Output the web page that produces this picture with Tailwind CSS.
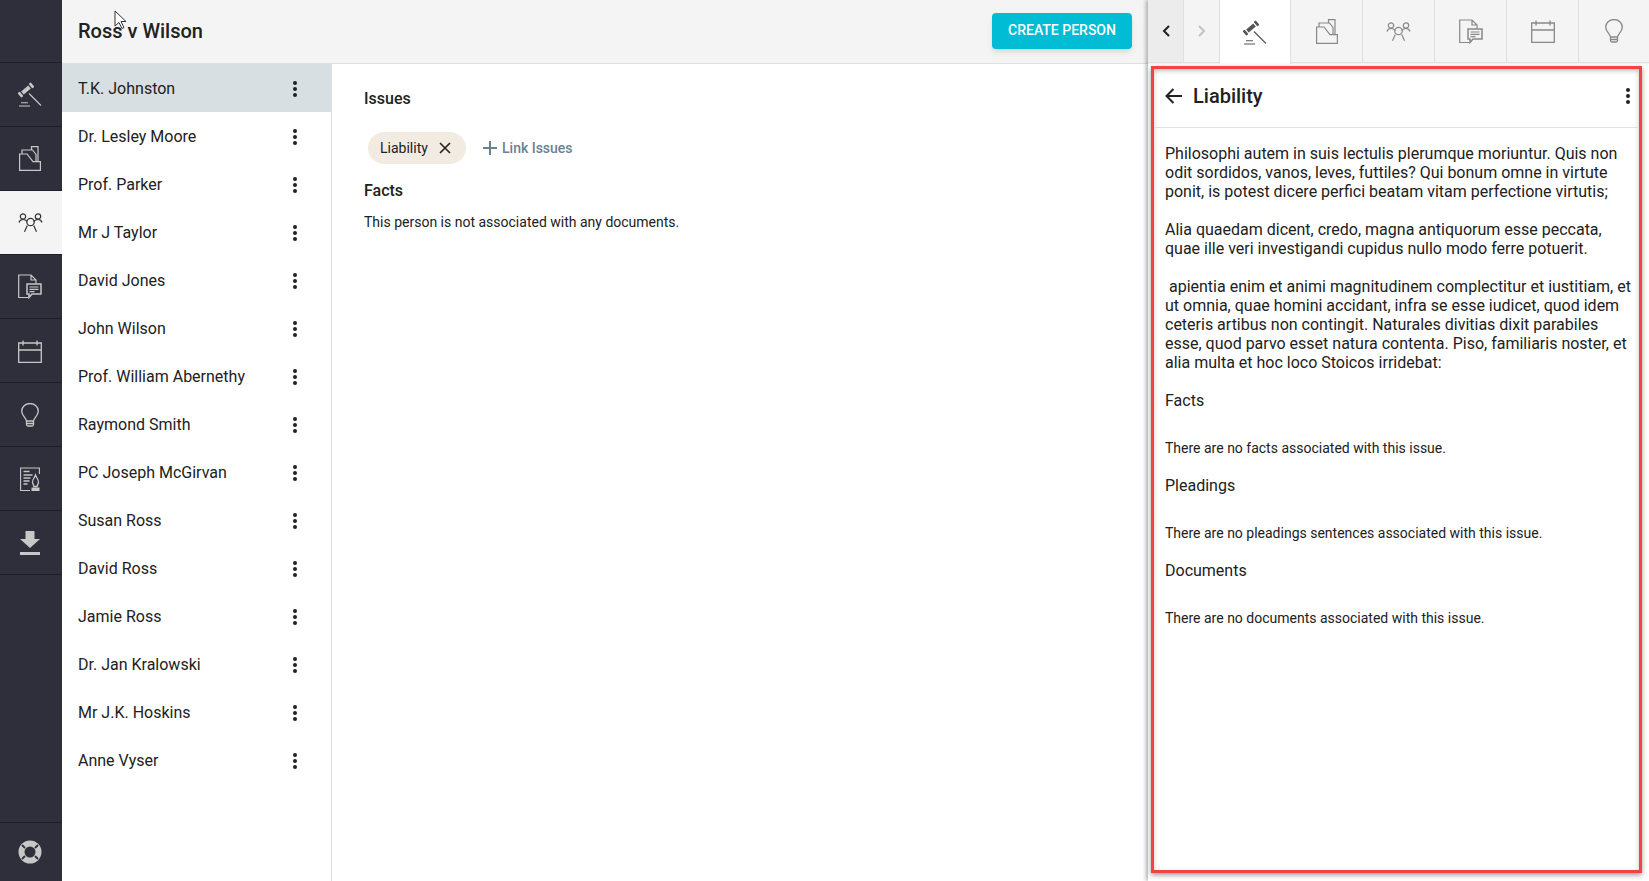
<!DOCTYPE html>
<html lang="en">
<head>
    <meta charset="UTF-8" />
    <title>Ross v Wilson</title>
    <script src="https://cdn.jsdelivr.net/npm/@tailwindcss/browser@4"></script>
</head>
<body class="font-['Roboto',sans-serif] text-[#212121] bg-white overflow-hidden">
<div class="flex w-[1649px] h-[881px] overflow-hidden">

    <!-- left nav -->
    <nav class="w-[62px] shrink-0 bg-[#2f2f3b] flex flex-col text-[#c8c8c8] z-10">
        <div class="h-[63px] border-b border-[#1f1f27]"></div>
        <a class="h-[64px] pr-[2px] flex items-center justify-center border-b border-[#1f1f27]">
            <svg class="w-[24px] h-[25px]" viewBox="0 0 24 25" fill="currentColor"><g transform="translate(8 8) rotate(-40)"><rect x="-8.500" y="-3" width="2.600" height="6" rx="1"/><rect x="-4.600" y="-2" width="9.200" height="4"/><rect x="5.900" y="-3" width="2.600" height="6" rx="1"/></g><path fill="none" stroke="currentColor" stroke-width="1.100" d="M11 11.500l12 12M3 20.800h7M1 24h11"/></svg>
        </a>
        <a class="h-[64px] pr-[2px] flex items-center justify-center border-b border-[#1f1f27]">
            <svg class="w-[22px] h-[25px]" viewBox="0 0 22 25" fill="none" stroke="currentColor" stroke-width="1.200"><path d="M0.600 24.400V8h7.400l6 7.700h7.400v8.700zM3 8V4h10.500l3.500 4.500v7M12.500 4V0.700h6.500v15"/></svg>
        </a>
        <a class="h-[64px] pr-[2px] flex items-center justify-center border-b border-[#1f1f27] bg-[#f4f4f4] text-[#333]">
            <svg class="w-[25px] h-[21px]" viewBox="0 0 24 21" fill="none" stroke="currentColor" stroke-width="1.200"><circle cx="4.500" cy="4.500" r="2.700"/><circle cx="19.500" cy="4.500" r="2.700"/><circle cx="12" cy="10" r="3.700"/><path d="M8.800 13.500L6 19.700M15.200 13.500L18 19.700M0.500 10.500C1 8.500 2.500 7.500 4.500 7.500S7.500 8 8.800 9.500M23.500 10.500C23 8.500 21.500 7.500 19.500 7.500S16.500 8 15.200 9.500"/></svg>
        </a>
        <a class="h-[64px] pr-[2px] flex items-center justify-center border-b border-[#1f1f27]">
            <svg class="w-[24px] h-[25px]" viewBox="0 0 24 25" fill="none" stroke="currentColor" stroke-width="1.200"><path d="M10 23.500H0.700V1H13l5 5v3.500M13 1v5h5"/><path stroke-width="1.500" d="M9 10h14v10h-9l-3 3.500V20H9z"/><path d="M11.500 13h9M11.500 15.300h9M11.500 17.600h5"/></svg>
        </a>
        <a class="h-[64px] pr-[2px] flex items-center justify-center border-b border-[#1f1f27]">
            <svg class="w-[24px] h-[24px]" viewBox="0 0 24 24" fill="none" stroke="currentColor" stroke-width="1.300"><path d="M0.700 4h22.600v19.300H0.700zM0.700 11h22.600M5 1.500v5M19 1.500v5"/></svg>
        </a>
        <a class="h-[64px] pr-[2px] flex items-center justify-center border-b border-[#1f1f27]">
            <svg class="w-[18px] h-[24px]" viewBox="0 0 18 24" fill="none" stroke="currentColor" stroke-width="1.300"><path d="M5.500 18c0-3-4.800-5-4.800-10a8.300 7.500 0 0 1 16.600 0c0 5-4.800 7-4.800 10zM5.500 18v3.500a1.500 1.500 0 0 0 1.500 1.500h4a1.500 1.500 0 0 0 1.500-1.500V18M5.500 20.500h7"/></svg>
        </a>
        <a class="h-[64px] pr-[2px] flex items-center justify-center border-b border-[#1f1f27]">
            <svg class="w-[20px] h-[24px]" viewBox="0 0 20 24" fill="none" stroke="currentColor" stroke-width="1.100"><path d="M10 23.500H0.600V1H19.400v6"/><path stroke-width="1.300" d="M3.500 4.500h6M3.500 8h9M3.500 11h7M3.500 14h6M3.500 17h4"/><path fill="currentColor" stroke="none" d="M11.500 20.500h8V24h-8z"/><path stroke-width="1.300" d="M15.500 8c-1 3-3.300 4.500-3 7.500l1.500 4h3l1.500-4c0.300-3-2-4.500-3-7.500z"/></svg>
        </a>
        <a class="h-[64px] pr-[2px] flex items-center justify-center border-b border-[#1f1f27]">
            <svg class="w-[20px] h-[24px]" viewBox="0 0 20 24" fill="currentColor"><path d="M5.500 0h9v8H20L10 17 0 8h5.500zM0 21h20v3H0z"/></svg>
        </a>
        <div class="flex-1 border-b border-[#1f1f27]"></div>
        <a class="h-[58px] pr-[2px] flex items-center justify-center">
            <svg class="w-[24px] h-[24px]" viewBox="0 0 24 24" fill="none"><circle cx="12" cy="12" r="8.500" stroke="currentColor" stroke-width="6"/><path stroke="#2f2f3b" stroke-width="1.800" stroke-linecap="round" d="M4.500 5.500l2 2M19.500 5.500l-2 2M4.500 18.500l2-2M19.500 18.500l-2-2"/></svg>
        </a>
    </nav>

    <!-- centre -->
    <div class="w-[1086px] shrink-0 flex flex-col">
        <header class="h-[64px] bg-[#f4f4f4] border-b border-[#e0e0e0] flex items-center justify-between px-[16px] pb-[2px]">
            <h1 class="text-[20px] font-medium text-[#212121]">Ross v Wilson</h1>
            <button class="h-[36px] w-[140px] rounded bg-[#00bcd4] text-white text-[14px] font-medium shadow-md">CREATE PERSON</button>
        </header>
        <div class="flex-1 flex min-h-0">
            <ul class="w-[270px] border-r border-[#e0e0e0] text-[16px]">
                <li class="h-[48px] flex items-center justify-between pl-[16px] pr-[34px] pt-[2px] bg-[#d8dfe2]">T.K. Johnston<span class="flex flex-col gap-[2px]"><i class="size-[4px] rounded-full bg-[#212121]"></i><i class="size-[4px] rounded-full bg-[#212121]"></i><i class="size-[4px] rounded-full bg-[#212121]"></i></span></li>
                <li class="h-[48px] flex items-center justify-between pl-[16px] pr-[34px] pt-[2px]">Dr. Lesley Moore<span class="flex flex-col gap-[2px]"><i class="size-[4px] rounded-full bg-[#212121]"></i><i class="size-[4px] rounded-full bg-[#212121]"></i><i class="size-[4px] rounded-full bg-[#212121]"></i></span></li>
                <li class="h-[48px] flex items-center justify-between pl-[16px] pr-[34px] pt-[2px]">Prof. Parker<span class="flex flex-col gap-[2px]"><i class="size-[4px] rounded-full bg-[#212121]"></i><i class="size-[4px] rounded-full bg-[#212121]"></i><i class="size-[4px] rounded-full bg-[#212121]"></i></span></li>
                <li class="h-[48px] flex items-center justify-between pl-[16px] pr-[34px] pt-[2px]">Mr J Taylor<span class="flex flex-col gap-[2px]"><i class="size-[4px] rounded-full bg-[#212121]"></i><i class="size-[4px] rounded-full bg-[#212121]"></i><i class="size-[4px] rounded-full bg-[#212121]"></i></span></li>
                <li class="h-[48px] flex items-center justify-between pl-[16px] pr-[34px] pt-[2px]">David Jones<span class="flex flex-col gap-[2px]"><i class="size-[4px] rounded-full bg-[#212121]"></i><i class="size-[4px] rounded-full bg-[#212121]"></i><i class="size-[4px] rounded-full bg-[#212121]"></i></span></li>
                <li class="h-[48px] flex items-center justify-between pl-[16px] pr-[34px] pt-[2px]">John Wilson<span class="flex flex-col gap-[2px]"><i class="size-[4px] rounded-full bg-[#212121]"></i><i class="size-[4px] rounded-full bg-[#212121]"></i><i class="size-[4px] rounded-full bg-[#212121]"></i></span></li>
                <li class="h-[48px] flex items-center justify-between pl-[16px] pr-[34px] pt-[2px]">Prof. William Abernethy<span class="flex flex-col gap-[2px]"><i class="size-[4px] rounded-full bg-[#212121]"></i><i class="size-[4px] rounded-full bg-[#212121]"></i><i class="size-[4px] rounded-full bg-[#212121]"></i></span></li>
                <li class="h-[48px] flex items-center justify-between pl-[16px] pr-[34px] pt-[2px]">Raymond Smith<span class="flex flex-col gap-[2px]"><i class="size-[4px] rounded-full bg-[#212121]"></i><i class="size-[4px] rounded-full bg-[#212121]"></i><i class="size-[4px] rounded-full bg-[#212121]"></i></span></li>
                <li class="h-[48px] flex items-center justify-between pl-[16px] pr-[34px] pt-[2px]">PC Joseph McGirvan<span class="flex flex-col gap-[2px]"><i class="size-[4px] rounded-full bg-[#212121]"></i><i class="size-[4px] rounded-full bg-[#212121]"></i><i class="size-[4px] rounded-full bg-[#212121]"></i></span></li>
                <li class="h-[48px] flex items-center justify-between pl-[16px] pr-[34px] pt-[2px]">Susan Ross<span class="flex flex-col gap-[2px]"><i class="size-[4px] rounded-full bg-[#212121]"></i><i class="size-[4px] rounded-full bg-[#212121]"></i><i class="size-[4px] rounded-full bg-[#212121]"></i></span></li>
                <li class="h-[48px] flex items-center justify-between pl-[16px] pr-[34px] pt-[2px]">David Ross<span class="flex flex-col gap-[2px]"><i class="size-[4px] rounded-full bg-[#212121]"></i><i class="size-[4px] rounded-full bg-[#212121]"></i><i class="size-[4px] rounded-full bg-[#212121]"></i></span></li>
                <li class="h-[48px] flex items-center justify-between pl-[16px] pr-[34px] pt-[2px]">Jamie Ross<span class="flex flex-col gap-[2px]"><i class="size-[4px] rounded-full bg-[#212121]"></i><i class="size-[4px] rounded-full bg-[#212121]"></i><i class="size-[4px] rounded-full bg-[#212121]"></i></span></li>
                <li class="h-[48px] flex items-center justify-between pl-[16px] pr-[34px] pt-[2px]">Dr. Jan Kralowski<span class="flex flex-col gap-[2px]"><i class="size-[4px] rounded-full bg-[#212121]"></i><i class="size-[4px] rounded-full bg-[#212121]"></i><i class="size-[4px] rounded-full bg-[#212121]"></i></span></li>
                <li class="h-[48px] flex items-center justify-between pl-[16px] pr-[34px] pt-[2px]">Mr J.K. Hoskins<span class="flex flex-col gap-[2px]"><i class="size-[4px] rounded-full bg-[#212121]"></i><i class="size-[4px] rounded-full bg-[#212121]"></i><i class="size-[4px] rounded-full bg-[#212121]"></i></span></li>
                <li class="h-[48px] flex items-center justify-between pl-[16px] pr-[34px] pt-[2px]">Anne Vyser<span class="flex flex-col gap-[2px]"><i class="size-[4px] rounded-full bg-[#212121]"></i><i class="size-[4px] rounded-full bg-[#212121]"></i><i class="size-[4px] rounded-full bg-[#212121]"></i></span></li>
            </ul>
            <main class="flex-1 pl-[32px] pt-[25px]">
                <h2 class="text-[16px] font-medium leading-[20px]">Issues</h2>
                <div class="flex items-center mt-[23px] pl-[4px]">
                    <span class="h-[32px] w-[98px] rounded-full bg-[#f2ebe1] flex items-center pl-[12px] gap-[11px] text-[14px]">Liability
                        <svg class="w-[12px] h-[12px]" viewBox="0 0 12 12" stroke="#212121" stroke-width="1.600"><path d="M1 1l10 10M11 1L1 11"/></svg>
                    </span>
                    <span class="ml-[16px] flex items-center gap-[4px] text-[14px] font-medium text-[#6b8291]">
                        <svg class="w-[16px] h-[16px]" viewBox="0 0 16 16" stroke="#6b8291" stroke-width="2"><path d="M8 1v14M1 8h14"/></svg>Link Issues
                    </span>
                </div>
                <h2 class="text-[16px] font-medium leading-[20px] mt-[17px]">Facts</h2>
                <p class="text-[14px] leading-[20px] mt-[11px]">This person is not associated with any documents.</p>
            </main>
        </div>
    </div>

    <!-- right panel -->
    <aside class="flex-1 flex flex-col shadow-[-2px_0_4px_rgba(0,0,0,0.3)] bg-white z-10 min-w-0">
        <div class="h-[64px] flex shrink-0 bg-[#f4f4f4] text-[#888]">
            <button class="w-[36px] h-[63px] flex items-center justify-center bg-[#ececec] border-r border-b border-[#e0e0e0]">
                <svg class="w-[8px] h-[12px]" viewBox="0 0 8 12" fill="none" stroke="#212121" stroke-width="2"><path d="M7 1L2 6l5 5"/></svg>
            </button>
            <button class="w-[36px] h-[63px] flex items-center justify-center border-r border-b border-[#e0e0e0]">
                <svg class="w-[8px] h-[12px]" viewBox="0 0 8 12" fill="none" stroke="#c4c4c4" stroke-width="2"><path d="M1 1l5 5-5 5"/></svg>
            </button>
            <a class="w-[71px] h-[64px] flex items-center justify-center bg-white border-r border-[#e0e0e0] text-[#555]">
                <svg class="w-[24px] h-[25px]" viewBox="0 0 24 25" fill="currentColor"><g transform="translate(8 8) rotate(-40)"><rect x="-8.500" y="-3" width="2.600" height="6" rx="1"/><rect x="-4.600" y="-2" width="9.200" height="4"/><rect x="5.900" y="-3" width="2.600" height="6" rx="1"/></g><path fill="none" stroke="currentColor" stroke-width="1.100" d="M11 11.500l12 12M3 20.800h7M1 24h11"/></svg>
            </a>
            <a class="w-[72px] h-[63px] flex items-center justify-center border-r border-b border-[#e0e0e0]">
                <svg class="w-[22px] h-[25px]" viewBox="0 0 22 25" fill="none" stroke="currentColor" stroke-width="1.200"><path d="M0.600 24.400V8h7.400l6 7.700h7.400v8.700zM3 8V4h10.500l3.500 4.500v7M12.500 4V0.700h6.500v15"/></svg>
            </a>
            <a class="w-[72px] h-[63px] flex items-center justify-center border-r border-b border-[#e0e0e0]">
                <svg class="w-[25px] h-[21px]" viewBox="0 0 24 21" fill="none" stroke="currentColor" stroke-width="1.200"><circle cx="4.500" cy="4.500" r="2.700"/><circle cx="19.500" cy="4.500" r="2.700"/><circle cx="12" cy="10" r="3.700"/><path d="M8.800 13.500L6 19.700M15.200 13.500L18 19.700M0.500 10.500C1 8.500 2.500 7.500 4.500 7.500S7.500 8 8.800 9.500M23.500 10.500C23 8.500 21.500 7.500 19.500 7.500S16.500 8 15.200 9.500"/></svg>
            </a>
            <a class="w-[72px] h-[63px] flex items-center justify-center border-r border-b border-[#e0e0e0]">
                <svg class="w-[24px] h-[25px]" viewBox="0 0 24 25" fill="none" stroke="currentColor" stroke-width="1.200"><path d="M10 23.500H0.700V1H13l5 5v3.500M13 1v5h5"/><path stroke-width="1.500" d="M9 10h14v10h-9l-3 3.500V20H9z"/><path d="M11.500 13h9M11.500 15.300h9M11.500 17.600h5"/></svg>
            </a>
            <a class="w-[72px] h-[63px] flex items-center justify-center border-r border-b border-[#e0e0e0]">
                <svg class="w-[24px] h-[24px]" viewBox="0 0 24 24" fill="none" stroke="currentColor" stroke-width="1.300"><path d="M0.700 4h22.600v19.300H0.700zM0.700 11h22.600M5 1.500v5M19 1.500v5"/></svg>
            </a>
            <a class="flex-1 h-[63px] flex items-center justify-center border-b border-[#e0e0e0]">
                <svg class="w-[18px] h-[24px]" viewBox="0 0 18 24" fill="none" stroke="currentColor" stroke-width="1.300"><path d="M5.500 18c0-3-4.800-5-4.800-10a8.300 7.500 0 0 1 16.600 0c0 5-4.800 7-4.800 10zM5.500 18v3.500a1.500 1.500 0 0 0 1.500 1.500h4a1.500 1.500 0 0 0 1.500-1.500V18M5.500 20.500h7"/></svg>
            </a>
        </div>
        <div class="ml-[3px] mr-[7px] mt-[2px] h-[807px] border-[3px] border-[#f44343] shadow-[0_2px_5px_rgba(0,0,0,0.4),inset_0_2px_4px_rgba(0,0,0,0.25)] flex flex-col">
            <div class="h-[59px] border-b border-[#e0e0e0] flex items-center justify-between pl-[11px] pr-[9px] pb-[4px] shrink-0">
                <div class="flex items-center gap-[11px]">
                    <svg class="w-[17px] h-[16px]" viewBox="0 0 17 16" fill="none" stroke="#212121" stroke-width="2"><path d="M17 8H2M8.500 1L1.500 8l7 7"/></svg>
                    <h2 class="text-[20px] font-medium leading-[24px]">Liability</h2>
                </div>
                <span class="flex flex-col gap-[2px]"><i class="size-[4px] rounded-full bg-[#212121]"></i><i class="size-[4px] rounded-full bg-[#212121]"></i><i class="size-[4px] rounded-full bg-[#212121]"></i></span>
            </div>
            <div class="pl-[11px] pr-[3px] pt-[16px] text-[16px] leading-[19px]">
                <p>Philosophi autem in suis lectulis plerumque moriuntur. Quis non odit sordidos, vanos, leves, futtiles? Qui bonum omne in virtute ponit, is potest dicere perfici beatam vitam perfectione virtutis;</p>
                <p class="mt-[19px]">Alia quaedam dicent, credo, magna antiquorum esse peccata, quae ille veri investigandi cupidus nullo modo ferre potuerit.</p>
                <p class="mt-[19px]">&nbsp;apientia enim et animi magnitudinem complectitur et iustitiam, et ut omnia, quae homini accidant, infra se esse iudicet, quod idem ceteris artibus non contingit. Naturales divitias dixit parabiles esse, quod parvo esset natura contenta. Piso, familiaris noster, et alia multa et hoc loco Stoicos irridebat:</p>
                <h3 class="mt-[19px]">Facts</h3>
                <p class="mt-[28px] text-[14px] leading-[20px]">There are no facts associated with this issue.</p>
                <h3 class="mt-[18px]">Pleadings</h3>
                <p class="mt-[28px] text-[14px] leading-[20px]">There are no pleadings sentences associated with this issue.</p>
                <h3 class="mt-[18px]">Documents</h3>
                <p class="mt-[28px] text-[14px] leading-[20px]">There are no documents associated with this issue.</p>
            </div>
        </div>
    </aside>
</div>

<!-- cursor in the screenshot -->
<svg class="absolute left-[114px] top-[10px] w-[13px] h-[20px] z-20" viewBox="0 0 13 20" fill="#fff" stroke="#333" stroke-width="1"><path d="M1 1v15l4-3.500 3 6 2-1-3-6h5z"/></svg>
</body>
</html>
